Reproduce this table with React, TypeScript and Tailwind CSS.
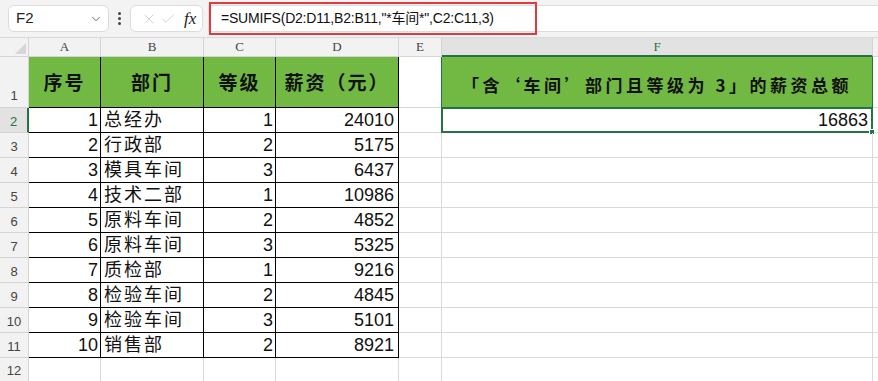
import { ChevronDown, X, Check } from 'lucide-react';

const rows = [
  [1, '总经办', 1, 24010],
  [2, '行政部', 2, 5175],
  [3, '模具车间', 3, 6437],
  [4, '技术二部', 1, 10986],
  [5, '原料车间', 2, 4852],
  [6, '原料车间', 3, 5325],
  [7, '质检部', 1, 9216],
  [8, '检验车间', 2, 4845],
  [9, '检验车间', 3, 5101],
  [10, '销售部', 2, 8921],
];

const colLetters = ['A', 'B', 'C', 'D', 'E'];

export default function App() {
  return (
    <div className="w-[878px] h-[381px] overflow-hidden bg-white font-['Liberation_Sans','Noto_Sans_CJK_SC',sans-serif] text-[#111]">
      {/* Toolbar */}
      <div className="h-[38px] bg-[#f3f3f3] border-b border-[#d9d9d9] flex items-center pl-2">
        <div className="w-[101px] h-[27px] bg-white border border-[#dcdcdc] rounded-md flex items-center pl-[7px] pr-[5px]">
          <span className="flex-1 text-[15px] text-[#222]">F2</span>
          <ChevronDown className="h-[14px] w-[14px] text-[#555]" strokeWidth={1.5} />
        </div>
        <div className="w-[21px] flex flex-col items-center gap-[2px]">
          <span className="w-[3px] h-[3px] rounded-full bg-[#444]" />
          <span className="w-[3px] h-[3px] rounded-full bg-[#444]" />
          <span className="w-[3px] h-[3px] rounded-full bg-[#444]" />
        </div>
        <div className="w-[73px] h-[27px] bg-white border border-[#dcdcdc] rounded-md flex items-center pl-[10px] gap-[3px]">
          <X className="h-[16px] w-[16px] text-[#c8c8c8]" strokeWidth={1.2} />
          <Check className="h-[16px] w-[16px] text-[#c8c8c8]" strokeWidth={1.2} />
          <span className="ml-[5px] font-['Liberation_Serif',serif] italic text-[17px] text-[#222]">fx</span>
        </div>
        <div className="ml-[5px] flex-1 h-[27px] bg-white border-y border-l border-[#dcdcdc] flex items-center">
          <div className="w-[328px] h-[33px] border-2 border-[#e0393e] flex items-center pl-[10px] text-[14px] tracking-[-0.2px] text-[#111]">
            =SUMIFS(D2:D11,B2:B11,"*车间*",C2:C11,3)
          </div>
        </div>
      </div>

      {/* Sheet grid */}
      <div className="grid grid-cols-[29px_72px_103px_72px_123px_43px_431px_1fr] grid-rows-[19px_51px_repeat(10,25px)_24px]">
        {/* Column headers */}
        <div className="bg-[#f2f2f2] border-r border-b border-[#d4d4d4] relative">
          <div className="absolute right-[2px] bottom-[2px] w-0 h-0 border-l-[11px] border-l-transparent border-b-[11px] border-b-[#d6d6d6]" />
        </div>
        {colLetters.map((c) => (
          <div
            key={c}
            className="bg-[#f2f2f2] border-r border-b border-[#d4d4d4] flex items-center justify-center font-['Liberation_Serif',serif] text-[13px] text-[#444]"
          >
            {c}
          </div>
        ))}
        <div className="bg-[#e2e2e2] border-r border-[#d4d4d4] border-b-2 border-b-[#227447] flex items-center justify-center font-['Liberation_Serif',serif] text-[13px] text-[#227447]">
          F
        </div>
        <div className="bg-[#f2f2f2] border-b border-[#d4d4d4]" />

        {/* Row 1: headers */}
        <div className="bg-[#f2f2f2] border-r border-b border-[#d4d4d4] flex items-end justify-center pb-[2px] text-[13px] text-[#444]">
          1
        </div>
        {['序号', '部门', '等级', '薪资（元）'].map((h) => (
          <div
            key={h}
            className="bg-[#72b944] border-r border-b border-black flex items-center justify-center pt-[4px] font-bold text-[19px] tracking-[2px]"
          >
            {h}
          </div>
        ))}
        <div className="border-r border-b border-r-[#227447] border-b-[#d9d9d9]" />
        <div className="bg-[#72b944] border-r border-[#227447] flex items-center justify-center pt-[4px] font-['Noto_Sans_CJK_SC',sans-serif] font-bold text-[17px] tracking-[3.5px]">
          「含‘车间’部门且等级为 3」的薪资总额
        </div>
        <div className="border-b border-[#d9d9d9]" />

        {/* Data rows */}
        {rows.map(([n, dept, lvl, pay], i) => {
          const r = i + 2;
          const sel = r === 2;
          return [
            <div
              key={`h${r}`}
              className={
                sel
                  ? 'bg-[#e2e2e2] border-r-2 border-r-[#227447] border-b border-b-[#d4d4d4] flex items-end justify-center pb-[1px] text-[13px] text-[#227447]'
                  : 'bg-[#f2f2f2] border-r border-b border-[#d4d4d4] flex items-end justify-center pb-[1px] text-[13px] text-[#444]'
              }
            >
              {r}
            </div>,
            <div key={`a${r}`} className="border-r border-b border-black flex items-end justify-end pr-[2px] pb-[1px] text-[18px] leading-[22px]">
              {n}
            </div>,
            <div key={`b${r}`} className="border-r border-b border-black flex items-end pl-[3px] pb-[1px] text-[18px] leading-[22px] tracking-[2px]">
              {dept}
            </div>,
            <div key={`c${r}`} className="border-r border-b border-black flex items-end justify-end pr-[2px] pb-[1px] text-[18px] leading-[22px]">
              {lvl}
            </div>,
            <div key={`d${r}`} className="border-r border-b border-black flex items-end justify-end pr-[4px] pb-[1px] text-[18px] leading-[22px]">
              {pay}
            </div>,
            <div key={`e${r}`} className="border-r border-b border-[#d9d9d9]" />,
            <div key={`f${r}`} className="relative border-r border-b border-[#d9d9d9] flex items-end justify-end pr-[4px] pb-[1px] text-[18px] leading-[22px]">
              {sel && (
                <>
                  <div className="absolute -left-[1px] -top-[1px] right-[-1px] bottom-[-1px] border-2 border-[#227447]" />
                  <div className="absolute right-[-3px] bottom-[-3px] w-[6px] h-[6px] bg-[#227447] border border-white" />
                  16863
                </>
              )}
            </div>,
            <div key={`g${r}`} className="border-b border-[#d9d9d9]" />,
          ];
        })}

        {/* Row 12 */}
        <div className="bg-[#f2f2f2] border-r border-b border-[#d4d4d4] flex items-end justify-center pb-[1px] text-[13px] text-[#444]">
          12
        </div>
        <div className="border-r border-b border-[#d9d9d9]" />
        <div className="border-r border-b border-[#d9d9d9]" />
        <div className="border-r border-b border-[#d9d9d9]" />
        <div className="border-r border-b border-[#d9d9d9]" />
        <div className="border-r border-b border-[#d9d9d9]" />
        <div className="border-r border-b border-[#d9d9d9]" />
        <div className="border-b border-[#d9d9d9]" />
      </div>
    </div>
  );
}
